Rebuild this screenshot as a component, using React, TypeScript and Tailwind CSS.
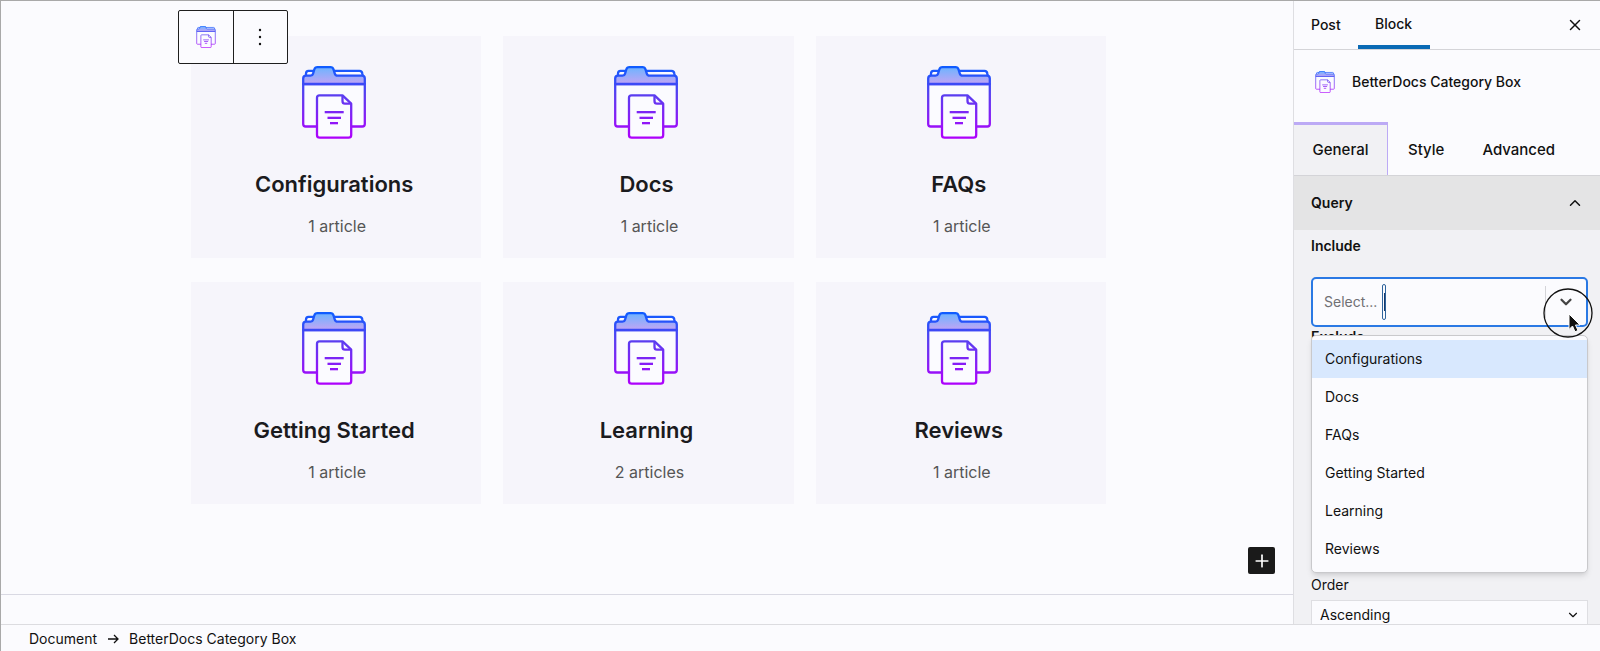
import React, { useId } from "react";
import { ChevronDown, ChevronUp, Plus, X } from "lucide-react";

interface Category {
  id: number;
  name: string;
  count: string;
}

const categories: Category[] = [
  { id: 1, name: "Configurations", count: "1 article" },
  { id: 2, name: "Docs", count: "1 article" },
  { id: 3, name: "FAQs", count: "1 article" },
  { id: 4, name: "Getting Started", count: "1 article" },
  { id: 5, name: "Learning", count: "2 articles" },
  { id: 6, name: "Reviews", count: "1 article" },
];

const FolderIcon: React.FC<{ className?: string }> = ({ className }) => {
  const id = useId();
  const line = `url(#${id}-line)`;

  return (
    <svg viewBox="0 0 64 73" fill="none" className={className} aria-hidden="true">
      <defs>
        <linearGradient id={`${id}-line`} gradientUnits="userSpaceOnUse" x1="32" y1="1" x2="32" y2="72">
          <stop offset="0" stopColor="#0f5cff" />
          <stop offset="0.4" stopColor="#5b3df0" />
          <stop offset="1" stopColor="#ae00fc" />
        </linearGradient>
        <linearGradient id={`${id}-fill`} gradientUnits="userSpaceOnUse" x1="32" y1="1" x2="32" y2="18">
          <stop offset="0" stopColor="#6cb4ff" />
          <stop offset="1" stopColor="#c2a4f4" />
        </linearGradient>
      </defs>
      <g stroke={line} strokeWidth="2.3" strokeLinejoin="round">
        {/* back folder */}
        <path d="M4 10V7.5Q4 4.8 6.5 4.8H12M31 4.8H57.5Q60 4.8 60.3 7.5L60.8 10" fill="#fbfbff" />
        {/* front folder */}
        <path d="M1.2 18V58Q1.2 60.5 3.7 60.5H60.3Q62.8 60.5 62.8 58V18Z" fill="#fbfbff" />
        <path
          d="M1.2 18V12.5Q1.2 9.7 4 9.7H8.5Q10.4 9.7 11 7.8L12.3 3.5Q13 1.2 15.5 1.2H28.5Q30.8 1.2 31.5 3.4L32.8 7.7Q33.4 9.7 35.4 9.7H60Q62.8 9.7 62.8 12.5V18Z"
          fill={`url(#${id}-fill)`}
        />
        {/* document */}
        <path
          d="M17.5 29.3H40.5L49.2 37.7V69Q49.2 71.7 46.5 71.7H17.8Q15 71.7 15 69V31.8Q15 29.3 17.5 29.3Z"
          fill="#fbfbff"
        />
        <path d="M40.5 29.3V35Q40.5 37.7 43 37.7H49.2" />
      </g>
      <g fill={line}>
        <rect x="22.7" y="45" width="19" height="2.3" />
        <rect x="25.5" y="50.7" width="13.5" height="2.3" />
        <rect x="28" y="56" width="8" height="2.3" />
      </g>
    </svg>
  );
};

const App: React.FC = () => {
  return (
    <div className="flex h-screen flex-col overflow-hidden border-t border-l border-[#a9a9a9] bg-[#fbfbfe] font-['Inter',sans-serif] text-sm text-[#111]">
      <div className="flex min-h-0 flex-1">
        {/* Canvas */}
        <main className="relative flex min-w-0 flex-1 flex-col">
          <div className="absolute top-[9px] left-[177px] flex h-[54px] w-[110px] rounded-xs border border-[#1e1e1e] bg-[#fbfbfe]">
            <button aria-label="Category Box" className="flex flex-1 items-center justify-center border-r border-[#1e1e1e]">
              <FolderIcon className="h-[22px] w-5" />
            </button>
            <button aria-label="Options" className="flex flex-1 items-center justify-center">
              <svg viewBox="0 0 20 20" className="size-5" fill="currentColor" aria-hidden="true">
                <circle cx="10" cy="3" r="1.2" />
                <circle cx="10" cy="10" r="1.2" />
                <circle cx="10" cy="17" r="1.2" />
              </svg>
            </button>
          </div>

          <div className="flex-1 pt-[35px] pr-[187px] pl-[190px]">
            <div className="grid grid-cols-3 gap-x-[22px] gap-y-6">
              {categories.map((category) => (
                <div key={category.id} className="flex flex-col items-center bg-[#f6f5fb] pt-[30px] pr-1 pb-5">
                  <FolderIcon className="h-[73px] w-16" />
                  <h2 className="mt-[29px] text-[22px] leading-8 font-semibold text-[#1b1b1e]">{category.name}</h2>
                  <p className="mt-[14px] pl-1.5 text-base leading-6 text-[#555]">{category.count}</p>
                </div>
              ))}
            </div>
          </div>

          <button
            aria-label="Add block"
            className="absolute right-[18px] bottom-[50px] flex size-[27px] items-center justify-center rounded-xs bg-[#1a1a1a] text-white"
          >
            <Plus className="size-5" strokeWidth={2} />
          </button>
          <div className="h-[30px] border-t border-[#d9d9e3]" />
        </main>

        {/* Settings sidebar */}
        <aside className="flex w-[307px] flex-col overflow-hidden border-l border-[#dedee2] bg-[#f1f1f4]">
          <div className="flex h-[49px] shrink-0 border-b border-[#d4d4d8] bg-[#fbfbfe] pb-px font-medium">
            <button className="px-[17px]">Post</button>
            <button className="-mb-px w-[72px] border-b-4 border-[#0a6ab5] pt-0.5">Block</button>
            <button aria-label="Close" className="mr-4 ml-auto">
              <X className="size-[18px]" strokeWidth={2} />
            </button>
          </div>

          <div className="flex h-[72px] shrink-0 items-center gap-[17px] bg-[#fbfbfe] pb-2 pl-[21px] font-medium">
            <FolderIcon className="h-[22px] w-5" />
            <h3>BetterDocs Category Box</h3>
          </div>

          <div className="flex h-[53px] shrink-0 bg-[#fbfbfe] text-[15px] font-medium">
            <button className="w-[94px] border-t-3 border-r border-[#bcaaf5] bg-[#f1f1f4]">General</button>
            <button className="px-5 pt-[3px]">Style</button>
            <button className="px-[18px] pt-[3px]">Advanced</button>
          </div>

          <button className="flex h-[55px] shrink-0 items-center justify-between border-t border-[#d4d4d8] bg-[#e4e4e5] pr-4 pl-[17px] font-semibold">
            Query
            <ChevronUp className="size-[18px]" strokeWidth={2} />
          </button>

          <div className="relative shrink-0 pr-3 pl-[17px]">
            <label htmlFor="include" className="block h-[47px] pt-1.5 font-semibold">
              Include
            </label>
            <div className="flex h-[50px] items-center rounded-[5px] border-2 border-[#2a79e4] bg-[#fbfbfe] pl-[11px]">
              <input
                id="include"
                type="text"
                placeholder="Select..."
                className="w-[58px] bg-transparent placeholder:text-[#707074] focus:outline-none"
              />
              <span className="flex h-9 w-1 justify-center rounded-full border border-[#2e639c]">
                <span className="my-2 w-px bg-[#17386b]" />
              </span>
              <span className="ml-auto h-8 w-px bg-[#d4d4d8]" />
              <ChevronDown className="mr-[11px] ml-[11px] size-[18px] text-[#444]" strokeWidth={3} />
            </div>
            <p className="h-[240px] font-semibold">Exclude</p>

            {/* Options menu */}
            <ul className="absolute top-[105px] right-3 left-[17px] rounded-[5px] border border-[#c9c9cc] bg-[#fbfbfe] py-1 shadow-md">
              {categories.map((category) => (
                <li key={category.id}>
                  <button
                    className={`h-[38px] w-full px-[13px] text-left ${category.id === 1 ? "bg-[#d8e8fe]" : ""}`}
                  >
                    {category.name}
                  </button>
                </li>
              ))}
            </ul>

            {/* Pointer */}
            <svg viewBox="0 0 50 50" fill="none" className="absolute top-[58px] right-[7px] size-[50px]" aria-hidden="true">
              <circle cx="25" cy="25" r="24" stroke="#111" strokeWidth="1.3" />
              <path d="M26 26V41.5L29.5 38L32 43.8L35 42.5L32.5 37H37Z" fill="#111" stroke="#fff" strokeWidth="1" />
            </svg>
          </div>

          <div className="shrink-0 pr-3 pl-[17px]">
            <label htmlFor="order" className="block h-[33px] pt-2">
              Order
            </label>
            <div className="relative">
              <select
                id="order"
                className="h-[30px] w-full appearance-none border border-[#dedee2] bg-[#fbfbfe] px-2"
                defaultValue="Ascending"
              >
                <option>Ascending</option>
                <option>Descending</option>
              </select>
              <ChevronDown className="pointer-events-none absolute top-2 right-2 size-3.5" strokeWidth={2} />
            </div>
          </div>
        </aside>
      </div>

      {/* Breadcrumb */}
      <footer className="flex h-[27px] shrink-0 items-center gap-[10px] border-t border-[#dcdce0] pt-0.5 pl-7">
        <a href="#document">Document</a>
        <svg viewBox="0 0 12 12" className="size-3" fill="none" stroke="currentColor" strokeWidth="1.3" aria-hidden="true">
          <path d="M1 6H11M7 2L11 6L7 10" />
        </svg>
        <a href="#block">BetterDocs Category Box</a>
      </footer>
    </div>
  );
};

export default App;
